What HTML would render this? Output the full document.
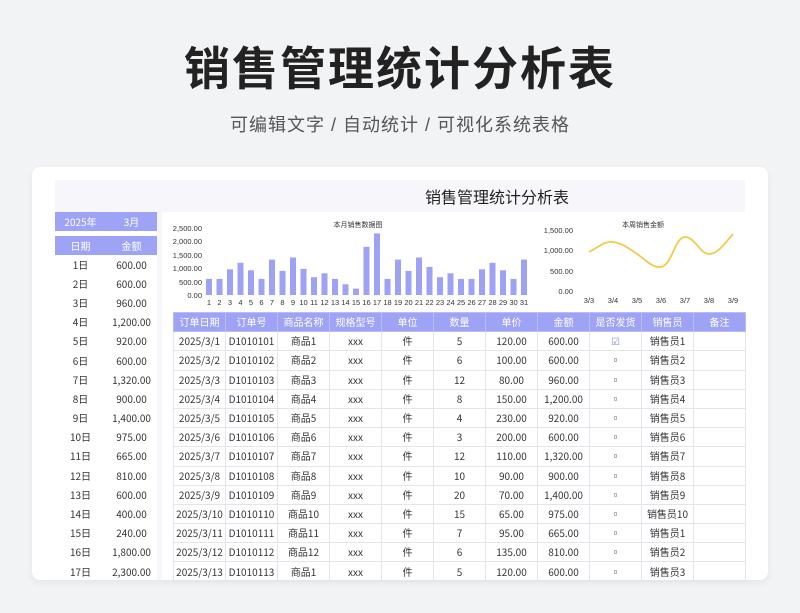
<!DOCTYPE html><html><head><meta charset="utf-8"><style>
*{margin:0;padding:0;box-sizing:border-box}
body{width:800px;height:613px;background:#f2f3f5;font-family:"Liberation Sans","Noto Sans CJK SC",sans-serif;position:relative;overflow:hidden;color:#333}
.t1{position:absolute;top:36px;left:0;width:800px;text-align:center;font-size:46px;font-weight:bold;color:#222;letter-spacing:2px;line-height:66px}
.t2{position:absolute;top:112px;left:0;width:800px;text-align:center;font-size:18px;color:#555;letter-spacing:1px;line-height:26px}
.card{position:absolute;left:32px;top:167px;width:736px;height:413px;background:#fff;border-radius:8px;box-shadow:0 3px 8px rgba(0,0,0,.06)}
.tb{position:absolute;left:55px;top:180px;width:690px;height:32px;background:#f7f7fb;font-size:16px;color:#222;padding-left:370px;line-height:32px;font-family:"Noto Sans CJK SC",sans-serif}
table{position:absolute;border-collapse:collapse;font-size:10px;table-layout:fixed;font-family:"Noto Sans CJK SC",sans-serif}
td{height:19.2px;line-height:12px;text-align:center;padding:0;white-space:nowrap;overflow:hidden;vertical-align:middle}
.main td{border:1px solid #e4e4ee;width:52px}
.h td{background:#9fa3f5;color:#fff;border-color:#b9bcf7}
.left td{width:51px}
.lh{position:absolute;left:55px;width:102px;height:19px;background:#9fa3f5;color:#fff;font-size:10px;display:flex;font-family:"Noto Sans CJK SC",sans-serif}
.lh span{flex:1;text-align:center;line-height:19px}
svg{position:absolute;left:0;top:0}
</style></head><body>
<div class="t1">销售管理统计分析表</div>
<div class="t2">可编辑文字 / 自动统计 / 可视化系统表格</div>
<div class="card"></div>
<div class="tb">销售管理统计分析表</div>
<div class="lh" style="top:212px"><span>2025年</span><span>3月</span></div>
<div class="lh" style="top:236px"><span>日期</span><span>金额</span></div>
<div style="position:absolute;left:157px;top:212px;width:5px;height:368px;background:#f7f7fb"></div>
<table class="left" style="left:55px;top:255px">
<tr><td>1日</td><td>600.00</td></tr><tr><td>2日</td><td>600.00</td></tr><tr><td>3日</td><td>960.00</td></tr><tr><td>4日</td><td>1,200.00</td></tr><tr><td>5日</td><td>920.00</td></tr><tr><td>6日</td><td>600.00</td></tr><tr><td>7日</td><td>1,320.00</td></tr><tr><td>8日</td><td>900.00</td></tr><tr><td>9日</td><td>1,400.00</td></tr><tr><td>10日</td><td>975.00</td></tr><tr><td>11日</td><td>665.00</td></tr><tr><td>12日</td><td>810.00</td></tr><tr><td>13日</td><td>600.00</td></tr><tr><td>14日</td><td>400.00</td></tr><tr><td>15日</td><td>240.00</td></tr><tr><td>16日</td><td>1,800.00</td></tr><tr><td>17日</td><td>2,300.00</td></tr>
</table>
<table class="main" style="left:173px;top:312px">
<tr class="h"><td>订单日期</td><td>订单号</td><td>商品名称</td><td>规格型号</td><td>单位</td><td>数量</td><td>单价</td><td>金额</td><td>是否发货</td><td>销售员</td><td>备注</td></tr>
<tr><td>2025/3/1</td><td>D1010101</td><td>商品1</td><td>xxx</td><td>件</td><td>5</td><td>120.00</td><td>600.00</td><td style="color:#7a7ff0">☑</td><td>销售员1</td><td></td></tr>
<tr><td>2025/3/2</td><td>D1010102</td><td>商品2</td><td>xxx</td><td>件</td><td>6</td><td>100.00</td><td>600.00</td><td>▫</td><td>销售员2</td><td></td></tr>
<tr><td>2025/3/3</td><td>D1010103</td><td>商品3</td><td>xxx</td><td>件</td><td>12</td><td>80.00</td><td>960.00</td><td>▫</td><td>销售员3</td><td></td></tr>
<tr><td>2025/3/4</td><td>D1010104</td><td>商品4</td><td>xxx</td><td>件</td><td>8</td><td>150.00</td><td>1,200.00</td><td>▫</td><td>销售员4</td><td></td></tr>
<tr><td>2025/3/5</td><td>D1010105</td><td>商品5</td><td>xxx</td><td>件</td><td>4</td><td>230.00</td><td>920.00</td><td>▫</td><td>销售员5</td><td></td></tr>
<tr><td>2025/3/6</td><td>D1010106</td><td>商品6</td><td>xxx</td><td>件</td><td>3</td><td>200.00</td><td>600.00</td><td>▫</td><td>销售员6</td><td></td></tr>
<tr><td>2025/3/7</td><td>D1010107</td><td>商品7</td><td>xxx</td><td>件</td><td>12</td><td>110.00</td><td>1,320.00</td><td>▫</td><td>销售员7</td><td></td></tr>
<tr><td>2025/3/8</td><td>D1010108</td><td>商品8</td><td>xxx</td><td>件</td><td>10</td><td>90.00</td><td>900.00</td><td>▫</td><td>销售员8</td><td></td></tr>
<tr><td>2025/3/9</td><td>D1010109</td><td>商品9</td><td>xxx</td><td>件</td><td>20</td><td>70.00</td><td>1,400.00</td><td>▫</td><td>销售员9</td><td></td></tr>
<tr><td>2025/3/10</td><td>D1010110</td><td>商品10</td><td>xxx</td><td>件</td><td>15</td><td>65.00</td><td>975.00</td><td>▫</td><td>销售员10</td><td></td></tr>
<tr><td>2025/3/11</td><td>D1010111</td><td>商品11</td><td>xxx</td><td>件</td><td>7</td><td>95.00</td><td>665.00</td><td>▫</td><td>销售员1</td><td></td></tr>
<tr><td>2025/3/12</td><td>D1010112</td><td>商品12</td><td>xxx</td><td>件</td><td>6</td><td>135.00</td><td>810.00</td><td>▫</td><td>销售员2</td><td></td></tr>
<tr><td>2025/3/13</td><td>D1010113</td><td>商品1</td><td>xxx</td><td>件</td><td>5</td><td>120.00</td><td>600.00</td><td>▫</td><td>销售员3</td><td></td></tr>
</table>
<svg width="800" height="613" font-family="Liberation Sans,Noto Sans CJK SC,sans-serif" font-size="7.5" fill="#333">
<text x="358" y="227" text-anchor="middle" font-size="7">本月销售数据图</text>
<g text-anchor="end"><text x="202" y="231">2,500.00</text><text x="202" y="244">2,000.00</text><text x="202" y="258">1,500.00</text><text x="202" y="271">1,000.00</text><text x="202" y="285">500.00</text><text x="202" y="298">0.00</text></g>
<g fill="#9ea2f5">
<rect x="206" y="278.9" width="6" height="16.1"/><rect x="216.5" y="278.9" width="6" height="16.1"/><rect x="227" y="269.3" width="6" height="25.7"/><rect x="237.5" y="262.8" width="6" height="32.2"/><rect x="248" y="270.3" width="6" height="24.7"/><rect x="258.5" y="278.9" width="6" height="16.1"/><rect x="269" y="259.6" width="6" height="35.4"/><rect x="279.5" y="270.9" width="6" height="24.1"/><rect x="290" y="257.5" width="6" height="37.5"/><rect x="300.5" y="268.9" width="6" height="26.1"/><rect x="311" y="277.2" width="6" height="17.8"/><rect x="321.5" y="273.3" width="6" height="21.7"/><rect x="332" y="278.9" width="6" height="16.1"/><rect x="342.5" y="284.3" width="6" height="10.7"/><rect x="353" y="288.6" width="6" height="6.4"/><rect x="363.5" y="246.8" width="6" height="48.2"/><rect x="374" y="233.4" width="6" height="61.6"/><rect x="384.5" y="278.9" width="6" height="16.1"/><rect x="395" y="259.6" width="6" height="35.4"/><rect x="405.5" y="270.9" width="6" height="24.1"/><rect x="416" y="257.5" width="6" height="37.5"/><rect x="426.5" y="266.9" width="6" height="28.1"/><rect x="437" y="277.2" width="6" height="17.8"/><rect x="447.5" y="273.3" width="6" height="21.7"/><rect x="458" y="278.9" width="6" height="16.1"/><rect x="468.5" y="278.9" width="6" height="16.1"/><rect x="479" y="269.3" width="6" height="25.7"/><rect x="489.5" y="262.8" width="6" height="32.2"/><rect x="500" y="270.3" width="6" height="24.7"/><rect x="510.5" y="278.9" width="6" height="16.1"/><rect x="521" y="259.6" width="6" height="35.4"/>
</g>
<g text-anchor="middle" font-size="7.5"><text x="209" y="305">1</text><text x="219.5" y="305">2</text><text x="230" y="305">3</text><text x="240.5" y="305">4</text><text x="251" y="305">5</text><text x="261.5" y="305">6</text><text x="272" y="305">7</text><text x="282.5" y="305">8</text><text x="293" y="305">9</text><text x="303.5" y="305">10</text><text x="314" y="305">11</text><text x="324.5" y="305">12</text><text x="335" y="305">13</text><text x="345.5" y="305">14</text><text x="356" y="305">15</text><text x="366.5" y="305">16</text><text x="377" y="305">17</text><text x="387.5" y="305">18</text><text x="398" y="305">19</text><text x="408.5" y="305">20</text><text x="419" y="305">21</text><text x="429.5" y="305">22</text><text x="440" y="305">23</text><text x="450.5" y="305">24</text><text x="461" y="305">25</text><text x="471.5" y="305">26</text><text x="482" y="305">27</text><text x="492.5" y="305">28</text><text x="503" y="305">29</text><text x="513.5" y="305">30</text><text x="524" y="305">31</text></g>
<text x="643" y="227" text-anchor="middle" font-size="7">本周销售金额</text>
<g text-anchor="end"><text x="573" y="233">1,500.00</text><text x="573" y="253">1,000.00</text><text x="573" y="274">500.00</text><text x="573" y="294">0.00</text></g>
<path d="M589,252 C600,246 605,241 613,242 C622,243 630,249 637,254 C646,260 652,268 661,267 C672,265 675,237 685,237 C695,237 700,254 709,254 C718,254 725,243 733,234" fill="none" stroke="#f0cc4a" stroke-width="1.8"/>
<g text-anchor="middle"><text x="589" y="303">3/3</text><text x="613" y="303">3/4</text><text x="637" y="303">3/5</text><text x="661" y="303">3/6</text><text x="685" y="303">3/7</text><text x="709" y="303">3/8</text><text x="733" y="303">3/9</text></g>
</svg>
</body></html>
